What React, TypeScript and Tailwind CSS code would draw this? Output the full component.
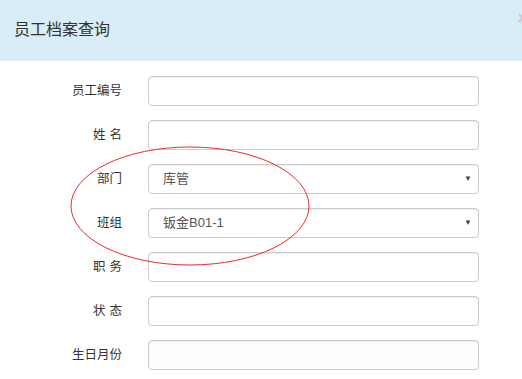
import { ReactNode } from "react"

const cjk = "font-['Liberation_Sans','Noto_Sans_CJK_SC',sans-serif]"

function Row({ label, spaced, children }: { label: string; spaced?: boolean; children?: ReactNode }) {
    return (
        <div className="flex items-center h-[30px]">
            <label className="w-[122px] text-right text-[12.5px] text-[#333]">
                {spaced ? <span className="tracking-[4px] mr-[-4px]">{label}</span> : label}
            </label>
            <div className="ml-[26px] w-[331px] h-full">{children}</div>
        </div>
    )
}

function TextInput({ muted }: { muted?: boolean }) {
    return (
        <div
            className={`h-full w-full rounded-[4px] border border-[#ccc] shadow-[inset_0_1px_1px_rgba(0,0,0,0.075)] ${muted ? "bg-[#fdfdfd]" : "bg-white"}`}
        />
    )
}

function Select({ value }: { value: string }) {
    return (
        <div className="h-full w-full rounded-[4px] border border-[#ccc] bg-white shadow-[inset_0_1px_1px_rgba(0,0,0,0.075)] flex items-center pl-[14px] pr-[6px]">
            <span className="text-[13px] text-[#555]">{value}</span>
            <span className="ml-auto text-[8px] text-[#444] leading-none">▼</span>
        </div>
    )
}

export default function App() {
    return (
        <div className={`relative w-[522px] h-[379px] overflow-hidden bg-white ${cjk}`}>
            <div className="h-[61px] bg-[#d9edf7] border-b border-[#e5eef2] flex items-start pl-[14px]">
                <h3 className="mt-[19px] text-[16px] text-[#333] leading-[22px]">员工档案查询</h3>
                <span className="ml-auto mt-[9px] mr-[-6px] text-[18px] font-bold text-[#c5c9cb] leading-none">×</span>
            </div>

            <div className="pt-[15px] flex flex-col gap-[14px]">
                <Row label="员工编号"><TextInput /></Row>
                <Row label="姓名" spaced><TextInput /></Row>
                <Row label="部门"><Select value="库管" /></Row>
                <Row label="班组"><Select value="钣金B01-1" /></Row>
                <Row label="职务" spaced><TextInput /></Row>
                <Row label="状态" spaced><TextInput /></Row>
                <Row label="生日月份"><TextInput muted /></Row>
            </div>

            {/* red annotation ellipse */}
            <svg className="absolute left-0 top-0 pointer-events-none" width="522" height="379">
                <ellipse cx="190" cy="206" rx="119" ry="59" fill="none" stroke="#ee2a2a" strokeWidth="1" />
            </svg>
        </div>
    )
}
